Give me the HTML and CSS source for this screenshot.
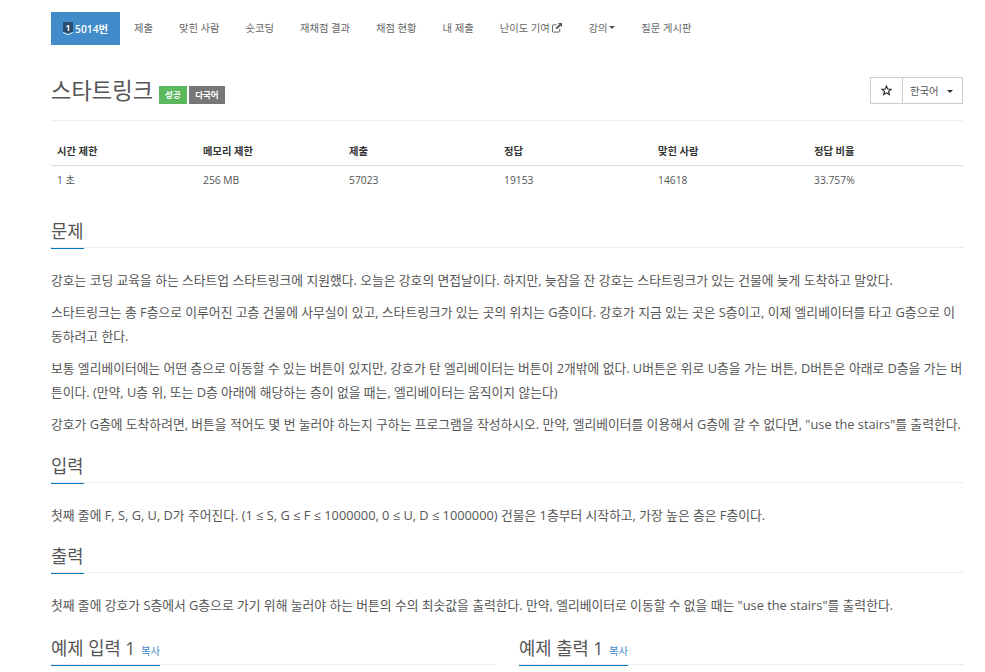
FILE: index.html
```html
<!DOCTYPE html>
<html lang="ko">
<head>
<meta charset="utf-8">
<title>스타트링크</title>
<link rel="stylesheet" href="styles.css">
</head>
<body>
<div class="page">
  <nav class="tabs">
    <a class="tab active"><svg class="shield" viewBox="0 0 10 13" width="10" height="13"><path d="M0 0h10v9.500l-5 2-5-2z" fill="#2b4d6b"/><path d="M0 10.500l5 2.200 5-2.200" fill="none" stroke="#e3ecf4" stroke-width="1"/><text x="5" y="8.500" text-anchor="middle" class="shield-num">1</text></svg>5014번</a>
    <a class="tab">제출</a>
    <a class="tab">맞힌 사람</a>
    <a class="tab">숏코딩</a>
    <a class="tab">재채점 결과</a>
    <a class="tab">채점 현황</a>
    <a class="tab">내 제출</a>
    <a class="tab">난이도 기여 <svg class="ext" viewBox="0 0 11 11" width="10" height="10"><path d="M8.500 6.500v2.500a1 1 0 0 1-1 1H1.500a1 1 0 0 1-1-1V3a1 1 0 0 1 1-1H5" fill="none" stroke="#555" stroke-width="1"/><path d="M6.500 0H11v4.500L9.500 3 5.500 7 4 5.500 8 1.500z" fill="#555"/></svg></a>
    <a class="tab">강의<span class="caret"></span></a>
    <a class="tab">질문 게시판</a>
  </nav>

  <header class="title-row">
    <h1 class="title"><span>스타트링크</span><span class="label green">성공</span><span class="label gray">다국어</span></h1>
    <div class="btn-group">
      <button class="btn star"><svg viewBox="0 0 12 12" width="11" height="11"><path d="M6 1.200l1.400 3.200 3.500.3-2.700 2.300.9 3.400L6 8.600l-3.100 1.800.9-3.400L1.100 4.700l3.500-.3z" fill="none" stroke="#222" stroke-width="1.200"/></svg></button>
      <button class="btn lang">한국어<span class="caret lang-caret"></span></button>
    </div>
  </header>

  <table class="stats">
    <thead>
      <tr><th>시간 제한</th><th>메모리 제한</th><th>제출</th><th>정답</th><th>맞힌 사람</th><th>정답 비율</th></tr>
    </thead>
    <tbody>
      <tr><td>1 초</td><td>256 MB</td><td>57023</td><td>19153</td><td>14618</td><td>33.757%</td></tr>
    </tbody>
  </table>

  <section class="sec first">
    <div class="headline"><h2>문제</h2></div>
    <div class="body">
      <p>강호는 코딩 교육을 하는 스타트업 스타트링크에 지원했다. 오늘은 강호의 면접날이다. 하지만, 늦잠을 잔 강호는 스타트링크가 있는 건물에 늦게 도착하고 말았다.</p>
      <p>스타트링크는 총 F층으로 이루어진 고층 건물에 사무실이 있고, 스타트링크가 있는 곳의 위치는 G층이다. 강호가 지금 있는 곳은 S층이고, 이제 엘리베이터를 타고 G층으로 이동하려고 한다.</p>
      <p>보통 엘리베이터에는 어떤 층으로 이동할 수 있는 버튼이 있지만, 강호가 탄 엘리베이터는 버튼이 2개밖에 없다. U버튼은 위로 U층을 가는 버튼, D버튼은 아래로 D층을 가는 버튼이다. (만약, U층 위, 또는 D층 아래에 해당하는 층이 없을 때는, 엘리베이터는 움직이지 않는다)</p>
      <p>강호가 G층에 도착하려면, 버튼을 적어도 몇 번 눌러야 하는지 구하는 프로그램을 작성하시오. 만약, 엘리베이터를 이용해서 G층에 갈 수 없다면, "use the stairs"를 출력한다.</p>
    </div>
  </section>

  <section class="sec">
    <div class="headline"><h2>입력</h2></div>
    <div class="body">
      <p>첫째 줄에 F, S, G, U, D가 주어진다. (1 ≤ S, G ≤ F ≤ 1000000, 0 ≤ U, D ≤ 1000000) 건물은 1층부터 시작하고, 가장 높은 층은 F층이다.</p>
    </div>
  </section>

  <section class="sec">
    <div class="headline"><h2>출력</h2></div>
    <div class="body">
      <p>첫째 줄에 강호가 S층에서 G층으로 가기 위해 눌러야 하는 버튼의 수의 최솟값을 출력한다. 만약, 엘리베이터로 이동할 수 없을 때는 "use the stairs"를 출력한다.</p>
    </div>
  </section>

  <div class="samples">
    <div class="headline"><h2>예제 입력 1 <a class="copy">복사</a></h2></div>
    <div class="headline"><h2>예제 출력 1 <a class="copy">복사</a></h2></div>
  </div>
</div>
</body>
</html>
```

FILE: styles.css
```css
* { box-sizing: border-box; }
html, body { margin: 0; padding: 0; height: 672px; overflow: hidden; }
body {
  background: #fff;
  color: #555;
  font-family: "Open Sans", "Noto Sans CJK KR", sans-serif;
  font-size: 12px;
}
.page { width: 912px; margin-left: 51px; }

.tabs { display: flex; padding-top: 12px; height: 45px; }
.tab {
  display: flex;
  align-items: center;
  height: 33px;
  padding: 0 13px 2px;
  font-size: 10.300px;
  color: #666;
  white-space: pre;
}
.tab.active {
  background: #428bca;
  color: #fff;
  font-weight: 600;
  padding: 0 0 1px 12px;
  width: 69px;
  margin-right: 1px;
}
.shield { flex: none; margin-right: 2px; }
.shield-num { font: 700 8.500px "Open Sans", sans-serif; fill: #fff; }
.ext { flex: none; margin-left: 0; }
.caret {
  display: inline-block;
  margin-left: 2px;
  border-top: 3px solid #555;
  border-left: 3px solid transparent;
  border-right: 3px solid transparent;
}

.title-row {
  display: flex;
  justify-content: space-between;
  align-items: flex-start;
  margin-top: 32px;
  height: 44px;
  border-bottom: 1px solid #eee;
}
.title { margin: 0; display: flex; align-items: flex-end; font-size: 22.200px; font-weight: 400; line-height: 27px; color: #555; }
.label {
  font-size: 8.500px;
  font-weight: 700;
  color: #fff;
  height: 18px;
  line-height: 18px;
  padding: 0 6px;
}
.label.green { background: #5cb85c; margin-left: 6px; padding: 0 6px; }
.label.gray { background: #777; margin-left: 2px; padding: 0 6.500px; }
.btn-group { display: flex; height: 27px; }
.btn {
  background: #fff;
  border: 1px solid #ccc;
  color: #555;
  font: 10.400px "Open Sans", "Noto Sans CJK KR", sans-serif;
  padding: 0;
}
.star { width: 33px; display: flex; align-items: center; justify-content: center; }
.lang { width: 61px; margin-left: -1px; text-align: left; padding-left: 7px; }
.lang-caret { margin-left: 8px; vertical-align: 2px; border-top-color: #333; }

.stats { width: 100%; table-layout: fixed; border-collapse: collapse; margin-top: 15px; }
.stats th, .stats td { text-align: left; font-size: 10.300px; padding: 0 6px; color: #555; }
.stats th { font-weight: 700; height: 29px; border-bottom: 1px solid #ddd; color: #333; }
.stats td { height: 27px; padding-top: 2px; }
.stats th:nth-child(1) { width: 146px; }
.stats th:nth-child(2) { width: 146px; }
.stats th:nth-child(3) { width: 155px; }
.stats th:nth-child(4) { width: 154px; }
.stats th:nth-child(5) { width: 156px; }

.sec { margin-top: 17px; }
.sec.first { margin-top: 27px; margin-bottom: 18px; }
.headline {
  border-bottom: 1px dotted #ddd;
  height: 29px;
}
.headline h2 {
  display: inline-block;
  margin: 0;
  height: 30px;
  font-size: 17.700px;
  font-weight: 400;
  line-height: 24px;
  color: #555;
  border-bottom: 1px solid #0076c0;
}
.body { padding-top: 20px; }
.body p {
  margin: 0 0 8px;
  font-size: 12.800px;
  line-height: 24px;
  color: #555;
}

.samples { display: grid; grid-template-columns: 444px 444px; column-gap: 24px; margin-top: 19px; }
.copy { font-size: 10.400px; color: #428bca; margin-left: 1px; }
```
